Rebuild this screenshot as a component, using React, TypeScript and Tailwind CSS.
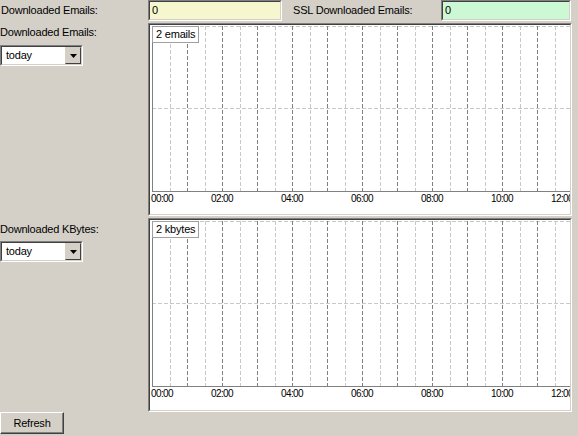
import React from 'react';

function Sunken({ className = '', inner = '', children }: { className?: string; inner?: string; children?: React.ReactNode }) {
  return (
    <div className={`border border-t-[#808080] border-l-[#808080] border-b-white border-r-white ${className}`}>
      <div className={`h-full w-full border border-t-[#404040] border-l-[#404040] border-b-[#d4d0c8] border-r-[#d4d0c8] ${inner}`}>
        {children}
      </div>
    </div>
  );
}

function Select({ value }: { value: string }) {
  return (
    <Sunken className="h-[21px] w-[83px]" inner="flex bg-white">
      <span className="flex-1 pl-[4px] leading-[17px]">{value}</span>
      <div className="flex h-[17px] w-[16px] items-center justify-center border border-t-[#d4d0c8] border-l-[#d4d0c8] border-b-[#404040] border-r-[#404040] bg-[#d4d0c8]">
        <svg width="7" height="4" viewBox="0 0 7 4">
          <path d="M0 0h7L3.5 4z" fill="#000" />
        </svg>
      </div>
    </Sunken>
  );
}

function Chart({ label, height }: { label: string; height: string }) {
  const halves = Array.from({ length: 23 }, (_, i) => i + 1);
  const hours = [0, 2, 4, 6, 8, 10, 12];
  // last label is pushed left so it starts inside the plot, then clipped
  const labelX = (h: number) => (h === 0 ? 1 : h === 12 ? 401 : 2 + 35 * h);
  const anchor = (h: number) => (h === 0 || h === 12 ? 'start' : 'middle');
  return (
    <Sunken className={`w-[424px] ${height}`} inner="relative overflow-hidden bg-white">
      <svg width="420" height="190" className="block" shapeRendering="crispEdges">
        <line x1="2" y1="1.5" x2="420" y2="1.5" stroke="#c8c8c8" strokeDasharray="4 2" />
        <line x1="2" y1="83.5" x2="420" y2="83.5" stroke="#c8c8c8" strokeDasharray="4 2" />
        {halves.map((k) => {
          const x = Math.round(2 + 17.5 * k) + 0.5;
          return (
            <line
              key={k}
              x1={x}
              y1="1"
              x2={x}
              y2="166"
              stroke={k % 2 === 0 ? '#808080' : '#c8c8c8'}
              strokeDasharray="4 2"
            />
          );
        })}
        <line x1="2.5" y1="1" x2="2.5" y2="166" stroke="#808080" />
        <line x1="2" y1="166.5" x2="420" y2="166.5" stroke="#808080" />
        {hours.map((h) => (
          <text
            key={h}
            x={labelX(h)}
            y="177"
            fontSize="10"
            letterSpacing="-0.6"
            fill="#000"
            textAnchor={anchor(h)}
          >
            {`${String(h).padStart(2, '0')}:00`}
          </text>
        ))}
      </svg>
      <div className="absolute left-[2px] top-px h-[17px] border border-[#a0a0a0] bg-white px-[3px] leading-[15px]">
        {label}
      </div>
    </Sunken>
  );
}

export default function App() {
  return (
    <div className="h-[436px] w-[578px] overflow-hidden bg-[#d4d0c8] font-['Liberation_Sans',Arial,sans-serif] text-[11px] tracking-[-0.2px] text-black">
      {/* counters */}
      <div className="flex h-[21px]">
        <div className="w-[148px] pl-px leading-[21px]">Downloaded Emails:</div>
        <Sunken className="h-[21px] w-[134px]" inner="bg-[#f7f7cf] pl-[2px] leading-[17px]">0</Sunken>
        <div className="ml-[11px] w-[148px] leading-[21px]">SSL Downloaded Emails:</div>
        <Sunken className="h-[21px] w-[130px]" inner="bg-[#ccf8d4] pl-[2px] leading-[17px]">0</Sunken>
      </div>

      {/* emails graph */}
      <div className="mt-[2px] flex">
        <div className="w-[148px] pt-[3px]">
          <div className="leading-[13px]">Downloaded Emails:</div>
          <div className="mt-[6px]">
            <Select value="today" />
          </div>
        </div>
        <Chart label="2 emails" height="h-[193px]" />
      </div>

      {/* kbytes graph */}
      <div className="mt-[2px] flex">
        <div className="w-[148px] pt-[5px]">
          <div className="leading-[13px]">Downloaded KBytes:</div>
          <div className="mt-[5px]">
            <Select value="today" />
          </div>
        </div>
        <Chart label="2 kbytes" height="h-[194px]" />
      </div>

      <button className="flex h-[22px] w-[64px] items-center justify-center border border-t-white border-l-white border-b-[#404040] border-r-[#404040] bg-[#d4d0c8] shadow-[inset_-1px_-1px_0_#808080]">
        Refresh
      </button>
    </div>
  );
}
